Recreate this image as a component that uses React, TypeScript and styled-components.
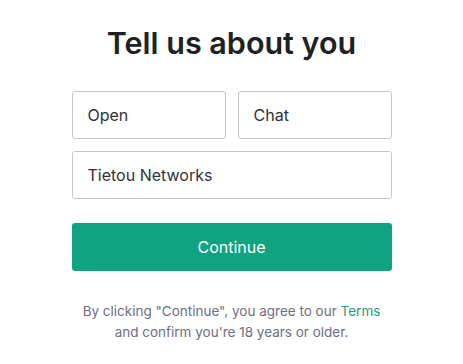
import styled, { createGlobalStyle } from "styled-components";

const GlobalStyle = createGlobalStyle`
  body {
    margin: 0;
    background: #ffffff;
    font-family: Inter, "Noto Sans", sans-serif;
  }
`;

export default function App() {
  return (
    <>
      <GlobalStyle />
      <S.Page>
        <S.Title>Tell us about you</S.Title>
        <S.Form>
          <S.Row>
            <S.Input defaultValue="Open" />
            <S.Input defaultValue="Chat" />
          </S.Row>
          <S.Input defaultValue="Tietou Networks" />
          <S.Button type="button">Continue</S.Button>
        </S.Form>
        <S.Footer>
          By clicking "Continue", you agree to our <S.Link>Terms</S.Link>
          <br />
          and confirm you're 18 years or older.
        </S.Footer>
      </S.Page>
    </>
  );
}

const S = {
  Page: styled.div`
    width: 463px;
    height: 364px;
    display: flex;
    flex-direction: column;
    align-items: center;
    padding-top: 23px;
    box-sizing: border-box;
  `,

  Title: styled.h1`
    margin: 0;
    font-size: 30.5px;
    font-weight: 600;
    line-height: 40px;
    color: #202123;
  `,

  Form: styled.div`
    width: 320px;
    margin-top: 28px;
    display: flex;
    flex-direction: column;
    gap: 12px;
  `,

  Row: styled.div`
    display: grid;
    grid-template-columns: 1fr 1fr;
    gap: 12px;
  `,

  Input: styled.input`
    width: 100%;
    height: 48px;
    box-sizing: border-box;
    border: 1px solid #c2c8d0;
    border-radius: 3px;
    padding: 0 15px;
    font-family: Inter, "Noto Sans", sans-serif;
    font-size: 16px;
    color: #2d333a;
    outline: none;
  `,

  Button: styled.button`
    margin-top: 12px;
    height: 48px;
    border: none;
    border-radius: 3px;
    background: #10a37f;
    color: #ffffff;
    font-family: Inter, "Noto Sans", sans-serif;
    font-size: 16px;
    cursor: pointer;
  `,

  Footer: styled.p`
    margin: 30px 0 0;
    text-align: center;
    font-size: 13.5px;
    line-height: 21px;
    color: #6e6e80;
  `,

  Link: styled.span`
    color: #10a37f;
  `,
};
